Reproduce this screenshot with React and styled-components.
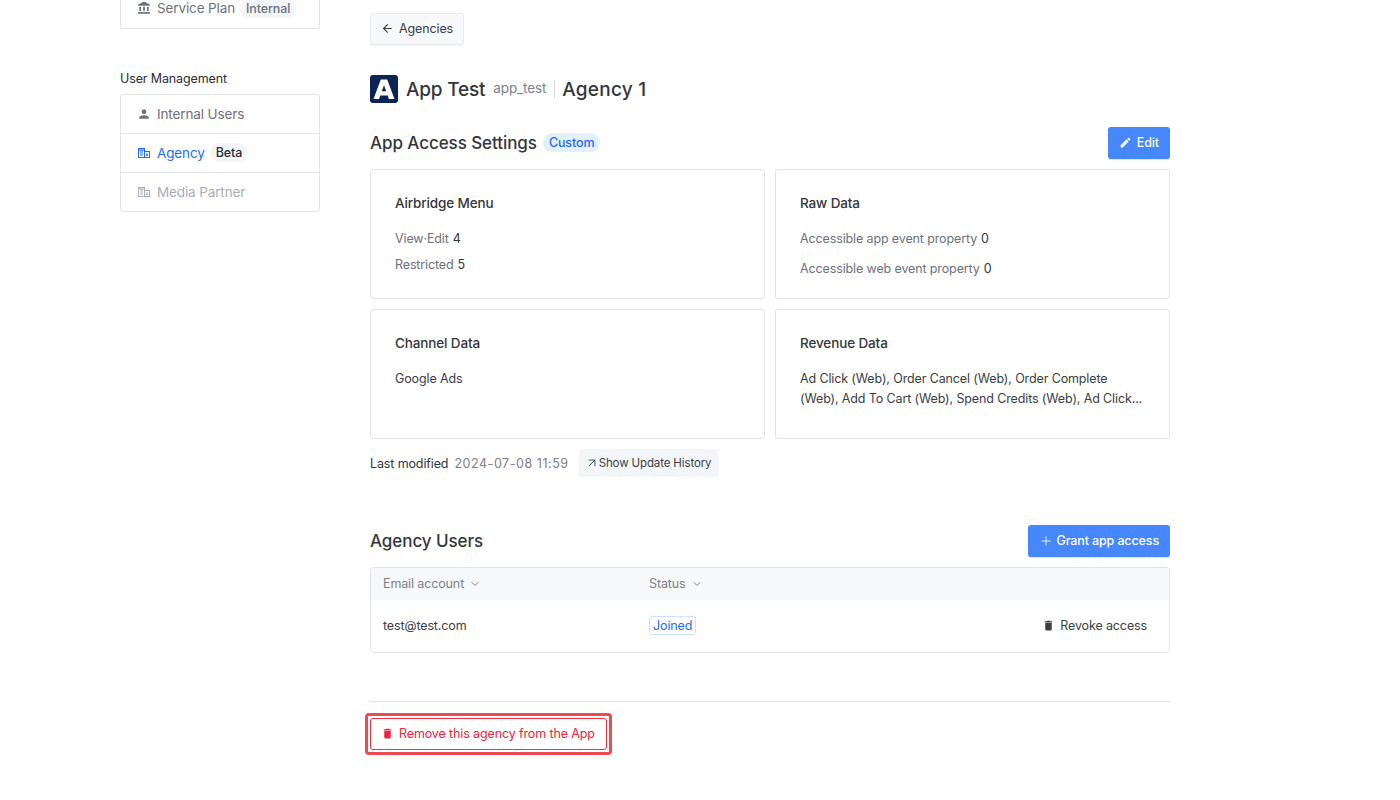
import styled, { createGlobalStyle } from 'styled-components'
import { ArrowLeft, ArrowUpRight, ChevronDown, Plus } from 'lucide-react'
import { MdAccountBalance, MdPerson, MdEdit, MdDelete } from 'react-icons/md'

const GlobalStyle = createGlobalStyle`
  html, body {
    margin: 0;
    height: 100%;
    overflow: hidden;
    background: #ffffff;
    font-family: Inter, "Noto Sans", sans-serif;
    font-size: 12.5px;
    letter-spacing: -0.01em;
    color: #2b2e33;
  }
  * { box-sizing: border-box; }
`

const Page = styled.div`
  display: flex;
  gap: 50px;
  height: 800px;
  padding-left: 120px;
`

const Sidebar = styled.aside`
  width: 200px;
  flex: none;
`

const NavCard = styled.div`
  border: 1px solid #e1e4e9;
  border-radius: 3px;
  ${({ $cut }) => $cut && 'border-top: 0; border-radius: 0 0 3px 3px;'}
`

const NavRow = styled.div`
  display: flex;
  align-items: center;
  height: ${({ $h }) => $h || 39}px;
  padding: ${({ $cut }) => ($cut ? '0 0 12px 16px' : '0 0 1px 16px')};
  color: ${({ $state }) => ($state === 'active' ? '#1f69ff' : $state === 'disabled' ? '#a9aeb7' : '#6c727b')};
  border-top: ${({ $first }) => ($first ? '0' : '1px solid #e1e4e9')};
  font-size: 13.5px;
  svg { flex: none; margin-right: 6px; }
`

const Pill = styled.span`
  margin-left: 5px;
  padding: 2px 6px;
  border-radius: 10px;
  background: #f3f5f8;
  color: ${({ $dark }) => ($dark ? '#2b2e33' : '#6c727b')};
  font-size: 12.5px;
  line-height: 15px;
  font-weight: 500;
`

const NavHeading = styled.div`
  margin: 42px 0 7px;
  font-size: 12.5px;
  line-height: 16px;
  color: #2b2e33;
`

const Main = styled.main`
  width: 800px;
  flex: none;
  padding-top: 13px;
`

const BackButton = styled.button`
  display: flex;
  align-items: center;
  gap: 5px;
  height: 32px;
  padding: 0 10px 1px;
  border: 1px solid #e8eaee;
  border-radius: 3px;
  background: #f7f8fa;
  box-shadow: 0 1px 1px rgba(0, 0, 0, 0.05);
  color: #3a3e44;
  font: inherit;
  letter-spacing: inherit;
`

const TitleRow = styled.div`
  display: flex;
  align-items: center;
  margin-top: 30px;
  height: 28px;
`

const Logo = styled.svg`
  width: 28px;
  height: 28px;
  margin-right: 8px;
`

const AppName = styled.h1`
  margin: 0;
  font-size: 19px;
  font-weight: 500;
  letter-spacing: ${({ $spread }) => ($spread ? '0.25px' : '-0.01em')};
  color: #33363b;
`

const AppId = styled.span`
  margin: 0 8px;
  font-size: 13.5px;
  color: #7b818a;
  position: relative;
  top: -1px;
`

const TitleDivider = styled.span`
  width: 1px;
  height: 18px;
  margin-right: 7px;
  background: #d5d9e0;
`

const SectionHead = styled.div`
  display: flex;
  align-items: center;
  gap: 6px;
  height: ${({ $h }) => $h}px;
  margin-top: ${({ $top }) => $top}px;
`

const SectionTitle = styled.h2`
  margin: 0 0 1px;
  font-size: 17px;
  font-weight: 500;
  letter-spacing: -0.07px;
  color: #33363b;
`

const BluePill = styled.span`
  margin-bottom: 1px;
  padding: 1px 6px;
  border-radius: 10px;
  background: #e3f0ff;
  color: #1f69ff;
  font-size: 12.5px;
  line-height: 17px;
  font-weight: 500;
`

const PrimaryButton = styled.button`
  display: flex;
  align-items: center;
  gap: ${({ $gap }) => $gap}px;
  height: ${({ $h }) => $h}px;
  margin-left: auto;
  padding: 0 11px 1px;
  border: 0;
  border-radius: 3px;
  background: #4687fb;
  box-shadow: 0 1px 1px rgba(0, 0, 0, 0.12);
  color: #ffffff;
  font: inherit;
  letter-spacing: inherit;
  font-weight: 500;
`

const CardGrid = styled.div`
  display: grid;
  grid-template-columns: 395px 395px;
  grid-auto-rows: 130px;
  gap: 10px;
  margin-top: 10px;
`

const Card = styled.section`
  padding: 23px 24px 0;
  border: 1px solid #e1e4e9;
  border-radius: 3px;
`

const CardTitle = styled.h3`
  margin: 0 0 16px;
  font-size: 13.5px;
  line-height: 20px;
  font-weight: 500;
  color: #33363b;
`

const Stat = styled.div`
  margin-bottom: ${({ $gap }) => $gap}px;
  line-height: 20px;
  color: #6c727b;
  strong { margin-left: 4px; font-weight: 400; color: #33363b; }
`

const Body = styled.div`
  line-height: 20px;
  color: #3a3e44;
`

const ModifiedRow = styled.div`
  display: flex;
  align-items: center;
  gap: 6px;
  height: 28px;
  margin-top: 10px;
  color: #33363b;
`

const Muted = styled.span`
  color: #7b818a;
  letter-spacing: 0.55px;
`

const GhostButton = styled.button`
  display: flex;
  align-items: center;
  height: 28px;
  margin-left: 4px;
  padding: 0 8px 1px 6px;
  border: 0;
  border-radius: 3px;
  background: #f3f6f9;
  color: #3a3e44;
  font: inherit;
  letter-spacing: inherit;
  font-size: 11.5px;
`

const Table = styled.div`
  margin-top: 10px;
  height: 86px;
  border: 1px solid #e1e4e9;
  border-radius: 4px;
  overflow: hidden;
  color: #3a3e44;
`

const TableRow = styled.div`
  display: grid;
  grid-template-columns: 266px 1fr auto;
  align-items: center;
  height: ${({ $h }) => $h}px;
  padding: 0 22px 1px 12px;
  background: ${({ $head }) => ($head ? '#f7f8fa' : '#ffffff')};
`

const HeadCell = styled.div`
  display: flex;
  align-items: center;
  gap: 5px;
  color: #7b818a;
`

const StatusTag = styled.span`
  justify-self: start;
  padding: 0 3px;
  border: 1px solid #c9e2ff;
  border-radius: 3px;
  color: #1f69ff;
  line-height: 17px;
`

const RevokeButton = styled.button`
  display: flex;
  align-items: center;
  gap: 5px;
  padding: 0;
  border: 0;
  background: none;
  color: #3a3e44;
  font: inherit;
  letter-spacing: inherit;
`

const Divider = styled.hr`
  margin: 48px 0 11px;
  border: 0;
  border-top: 1px solid #e1e4e9;
`

// red annotation frame drawn around the button in the screenshot
const Highlight = styled.div`
  display: inline-flex;
  margin-left: -5px;
  padding: 2px;
  border: 3px solid #ef4a4f;
  border-radius: 4px;
`

const RemoveButton = styled.button`
  display: flex;
  align-items: center;
  gap: 5px;
  height: 32px;
  padding: 0 11px 1px 10px;
  border: 1px solid #f0303e;
  border-radius: 3px;
  background: #ffffff;
  color: #f0243a;
  font: inherit;
  letter-spacing: inherit;
`

function BuildingIcon() {
  return (
    <svg width="14" height="14" viewBox="0 0 14 14" fill="currentColor">
      <path d="M1 2h7v10H1zm1 1v8h5V3z" fillRule="evenodd" />
      <path d="M7 5h6v7H7zm1 1v5h4V6z" fillRule="evenodd" />
      <path d="M3 4.5h3v1H3zM3 6.5h3v1H3zM3 8.5h3v1H3zM9 7.5h2v1H9zM9 9h2v1H9z" />
      <path d="M2 3h5v2H2z" opacity="0.5" />
    </svg>
  )
}

function App() {
  return (
    <>
      <GlobalStyle />
      <Page>
        <Sidebar>
          <NavCard $cut>
            <NavRow $first $cut $h={28}>
              <MdAccountBalance size={14} />
              Service Plan
              <Pill>Internal</Pill>
            </NavRow>
          </NavCard>
          <NavHeading>User Management</NavHeading>
          <NavCard>
            <NavRow $first $h={38}>
              <MdPerson size={14} />
              Internal Users
            </NavRow>
            <NavRow $state="active">
              <BuildingIcon />
              Agency
              <Pill $dark>Beta</Pill>
            </NavRow>
            <NavRow $state="disabled">
              <BuildingIcon />
              Media Partner
            </NavRow>
          </NavCard>
        </Sidebar>

        <Main>
          <BackButton>
            <ArrowLeft size={13} />
            Agencies
          </BackButton>

          <TitleRow>
            <Logo viewBox="0 0 28 28">
              <rect width="28" height="28" rx="3" fill="#0c2356" />
              <path d="M10.8 4.5h6.4L24.5 24h-5.6l-1.2-3.4h-7.4L9.1 24H3.5zm3.2 5.7-2.2 6.1h4.4z" fill="#ffffff" fillRule="evenodd" />
            </Logo>
            <AppName>App Test</AppName>
            <AppId>app_test</AppId>
            <TitleDivider />
            <AppName $spread>Agency 1</AppName>
          </TitleRow>

          <SectionHead $top={24} $h={32}>
            <SectionTitle>App Access Settings</SectionTitle>
            <BluePill>Custom</BluePill>
            <PrimaryButton $h={32} $gap={5}>
              <MdEdit size={13} />
              Edit
            </PrimaryButton>
          </SectionHead>

          <CardGrid>
            <Card>
              <CardTitle>Airbridge Menu</CardTitle>
              <Stat $gap={6}>View·Edit<strong>4</strong></Stat>
              <Stat $gap={6}>Restricted<strong>5</strong></Stat>
            </Card>
            <Card>
              <CardTitle>Raw Data</CardTitle>
              <Stat $gap={10}>Accessible app event property<strong>0</strong></Stat>
              <Stat $gap={10}>Accessible web event property<strong>0</strong></Stat>
            </Card>
            <Card>
              <CardTitle>Channel Data</CardTitle>
              <Body>Google Ads</Body>
            </Card>
            <Card>
              <CardTitle>Revenue Data</CardTitle>
              <Body>
                Ad Click (Web), Order Cancel (Web), Order Complete
                <br />
                (Web), Add To Cart (Web), Spend Credits (Web), Ad Click...
              </Body>
            </Card>
          </CardGrid>

          <ModifiedRow>
            Last modified
            <Muted>2024-07-08 11:59</Muted>
            <GhostButton>
              <ArrowUpRight size={14} strokeWidth={1.5} />
              Show Update History
            </GhostButton>
          </ModifiedRow>

          <SectionHead $top={48} $h={32}>
            <SectionTitle>Agency Users</SectionTitle>
            <PrimaryButton $h={32} $gap={3}>
              <Plus size={14} strokeWidth={1.5} />
              Grant app access
            </PrimaryButton>
          </SectionHead>

          <Table>
            <TableRow $head $h={32}>
              <HeadCell>Email account<ChevronDown size={12} /></HeadCell>
              <HeadCell>Status<ChevronDown size={12} /></HeadCell>
            </TableRow>
            <TableRow $h={52}>
              <span>test@test.com</span>
              <StatusTag>Joined</StatusTag>
              <RevokeButton>
                <MdDelete size={13} />
                Revoke access
              </RevokeButton>
            </TableRow>
          </Table>

          <Divider />

          <Highlight>
            <RemoveButton>
              <MdDelete size={13} />
              Remove this agency from the App
            </RemoveButton>
          </Highlight>
        </Main>
      </Page>
    </>
  )
}

export default App
